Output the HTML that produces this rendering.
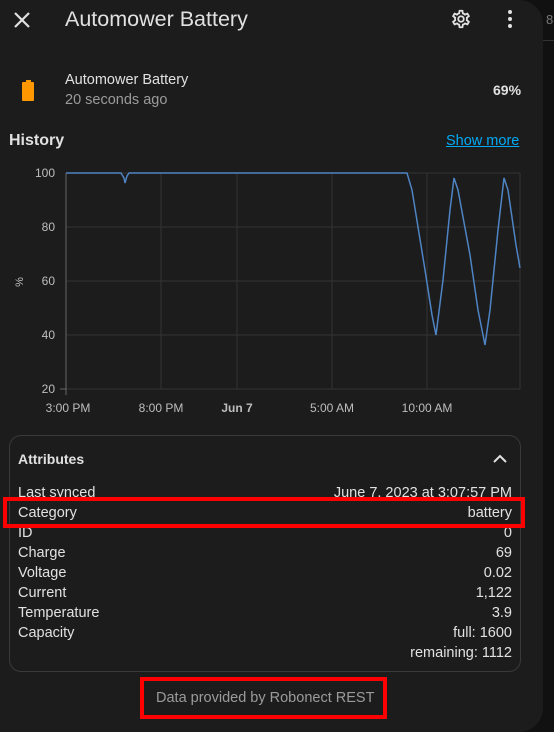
<!DOCTYPE html>
<html><head><style>
*{margin:0;padding:0;box-sizing:border-box}
body{width:554px;height:732px;background:#111;font-family:"Liberation Sans",sans-serif;color:#e1e1e1;position:relative;overflow:hidden}
.dlg{position:absolute;left:0;top:0;width:543px;height:732px;background:#1c1c1c;border-bottom-right-radius:24px;border-top-right-radius:24px}
.t{position:absolute;white-space:nowrap}
.row{position:absolute;left:18px;width:494px;font-size:14.5px;display:flex;justify-content:space-between}
.red{position:absolute;border:4px solid #f00}
</style></head><body>
<div class="t" style="left:546px;top:12px;font-size:13px;color:#777">8</div>
<div style="position:absolute;left:543px;top:40px;width:11px;height:1px;background:#333"></div>
<div class="dlg">
<svg style="position:absolute;left:12px;top:10px" width="20" height="20" viewBox="0 0 20 20"><path d="M3 3L17 17M17 3L3 17" stroke="#e1e1e1" stroke-width="2.2"/></svg>
<div class="t" style="left:65px;top:7px;font-size:21.5px;color:#e1e1e1">Automower Battery</div>
<svg style="position:absolute;left:450px;top:8px" width="22" height="22" viewBox="0 0 24 24"><path fill="#e1e1e1" d="M12,8A4,4 0 0,1 16,12A4,4 0 0,1 12,16A4,4 0 0,1 8,12A4,4 0 0,1 12,8M12,10A2,2 0 0,0 10,12A2,2 0 0,0 12,14A2,2 0 0,0 14,12A2,2 0 0,0 12,10M10,22C9.750,22 9.54,21.82 9.5,21.58L9.13,18.93C8.5,18.68 7.96,18.34 7.44,17.94L4.95,18.95C4.73,19.03 4.46,18.95 4.34,18.73L2.34,15.27C2.21,15.05 2.27,14.78 2.46,14.63L4.57,12.97L4.5,12L4.57,11L2.46,9.37C2.27,9.22 2.21,8.95 2.34,8.73L4.34,5.27C4.46,5.05 4.73,4.96 4.95,5.05L7.440,6.05C7.96,5.66 8.5,5.32 9.13,5.07L9.5,2.42C9.54,2.18 9.75,2 10,2H14C14.25,2 14.46,2.18 14.5,2.42L14.87,5.07C15.5,5.32 16.04,5.66 16.56,6.05L19.05,5.05C19.27,4.96 19.54,5.05 19.66,5.27L21.66,8.73C21.79,8.95 21.73,9.22 21.54,9.37L19.43,11L19.5,12L19.43,13L21.54,14.63C21.73,14.78 21.79,15.05 21.66,15.27L19.66,18.73C19.54,18.95 19.27,19.04 19.05,18.95L16.56,17.95C16.04,18.34 15.5,18.68 14.87,18.93L14.5,21.58C14.46,21.82 14.25,22 14,22H10M11.25,4L10.88,6.61C9.68,6.86 8.62,7.5 7.85,8.39L5.44,7.35L4.69,8.65L6.8,10.2C6.4,11.37 6.4,12.64 6.8,13.8L4.68,15.36L5.43,16.66L7.86,15.62C8.63,16.5 9.68,17.14 10.87,17.38L11.24,20H12.76L13.13,17.39C14.32,17.14 15.37,16.5 16.14,15.62L18.57,16.66L19.32,15.36L17.2,13.81C17.6,12.64 17.6,11.37 17.2,10.2L19.31,8.65L18.56,7.35L16.15,8.39C15.38,7.5 14.32,6.86 13.12,6.620L12.75,4H11.25Z"/></svg>
<svg style="position:absolute;left:500px;top:8px" width="20" height="22" viewBox="0 0 20 22"><circle cx="10" cy="4" r="2" fill="#e1e1e1"/><circle cx="10" cy="11" r="2" fill="#e1e1e1"/><circle cx="10" cy="18" r="2" fill="#e1e1e1"/></svg>
<svg style="position:absolute;left:22px;top:80px" width="13" height="21" viewBox="0 0 13 21"><rect x="4" y="0" width="5" height="3" fill="#ff9800"/><rect x="0" y="2" width="12" height="19" rx="1" fill="#ff9800"/></svg>
<div class="t" style="left:65px;top:72px;font-size:14.5px;color:#e1e1e1">Automower Battery</div>
<div class="t" style="left:65px;top:92px;font-size:14.5px;color:#9b9b9b">20 seconds ago</div>
<div class="t" style="left:493px;top:82px;font-size:14px;color:#e1e1e1;font-weight:bold">69%</div>
<div class="t" style="left:9px;top:132px;font-size:16px;font-weight:bold;color:#e1e1e1">History</div>
<div class="t" style="left:446px;top:133px;font-size:14.5px;color:#03a9f4;text-decoration:underline">Show more</div>
<svg style="position:absolute;left:0;top:160px" width="543" height="260" viewBox="0 160 543 260">
<g stroke="#333" stroke-width="1">
<path d="M66 173H520M66 227H520M66 281H520M66 335H520M66 389H520"/>
<path d="M161 173V389M237 173V389M332 173V389M427 173V389M520 173V389"/>
</g>
<path d="M66 173V395M60 389H66" stroke="#666" stroke-width="1"/>
<g fill="#bdbdbd" font-size="12" font-family="Liberation Sans" text-anchor="end">
<text x="55" y="177">100</text><text x="55" y="231">80</text><text x="55" y="285">60</text><text x="55" y="339">40</text><text x="55" y="393">20</text>
</g>
<text x="20" y="285" fill="#bdbdbd" font-size="11" transform="rotate(-90 20 282)" text-anchor="middle">%</text>
<g fill="#bdbdbd" font-size="12" font-family="Liberation Sans" text-anchor="middle">
<text x="68" y="412">3:00 PM</text><text x="161" y="412">8:00 PM</text><text x="237" y="412" font-weight="bold">Jun 7</text><text x="332" y="412">5:00 AM</text><text x="427" y="412">10:00 AM</text>
</g>
<path d="M66 173H121L124 178L125 183L127 176L129 173H407L412 190L425 270L432 315L436 335L443 280L450 210L454 178L458 190L470 255L478 310L485 345L490 310L498 230L504 178L508 190L516 245L520 268" fill="none" stroke="#4e84c4" stroke-width="1.5"/>
</svg>
<div style="position:absolute;left:9px;top:435px;width:512px;height:237px;border:1px solid #3a3a3a;border-radius:12px"></div>
<div class="t" style="left:18px;top:451px;font-size:14px;font-weight:bold;color:#e1e1e1">Attributes</div>
<svg style="position:absolute;left:492px;top:453px" width="16" height="12" viewBox="0 0 16 12"><path d="M2 9L8 3L14 9" fill="none" stroke="#e1e1e1" stroke-width="2"/></svg>
<div class="row" style="top:485px"><span>Last synced</span><span>June 7, 2023 at 3:07:57 PM</span></div>
<div class="row" style="top:505px"><span>Category</span><span>battery</span></div>
<div class="row" style="top:525px"><span>ID</span><span>0</span></div>
<div class="row" style="top:545px"><span>Charge</span><span>69</span></div>
<div class="row" style="top:565px"><span>Voltage</span><span>0.02</span></div>
<div class="row" style="top:585px"><span>Current</span><span>1,122</span></div>
<div class="row" style="top:605px"><span>Temperature</span><span>3.9</span></div>
<div class="row" style="top:625px"><span>Capacity</span><span>full: 1600</span></div>
<div class="row" style="top:645px"><span></span><span>remaining: 1112</span></div>
<div class="red" style="left:3px;top:497px;height:31px;width:522px"></div>
<div class="t" style="left:156px;top:690px;font-size:14.5px;color:#9b9b9b">Data provided by Robonect REST</div>
<div class="red" style="left:140px;top:677px;width:247px;height:42px"></div>
</div>
</body></html>
